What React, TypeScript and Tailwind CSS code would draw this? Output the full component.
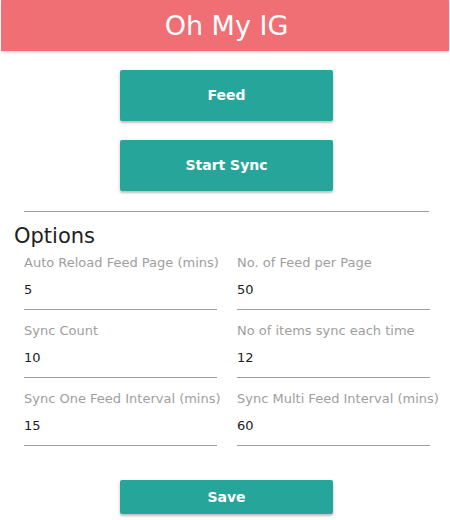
const options = [
  { label: 'Auto Reload Feed Page (mins)', value: '5' },
  { label: 'No. of Feed per Page', value: '50' },
  { label: 'Sync Count', value: '10' },
  { label: 'No of items sync each time', value: '12' },
  { label: 'Sync One Feed Interval (mins)', value: '15' },
  { label: 'Sync Multi Feed Interval (mins)', value: '60' },
];

function Btn({ children, h = 'h-[51px]' }: { children: React.ReactNode; h?: string }) {
  return (
    <button className={`w-[213px] ${h} rounded-[2px] bg-[#26a69a] text-white text-[14px] font-semibold shadow-[0_2px_2px_rgba(0,0,0,0.18),0_1px_4px_rgba(0,0,0,0.12)]`}>
      {children}
    </button>
  );
}

function Field({ label, value }: { label: string; value: string }) {
  return (
    <div className="px-[10px] h-[68px]">
      <div className="text-[13px] leading-[18px] text-[#9e9e9e] whitespace-nowrap pt-[1px]">{label}</div>
      <div className="mt-[9px] text-[13px] leading-[18px] text-[#212121] border-b border-[#9e9e9e] pb-[10px]">{value}</div>
    </div>
  );
}

export default function App() {
  return (
    <div className="w-[450px] h-[520px] bg-white font-['DejaVu_Sans',sans-serif] overflow-hidden">
      <header className="mx-px h-[51px] bg-[#ef6f74] flex items-center justify-center pl-[3px] shadow-[0_2px_2px_rgba(0,0,0,0.12)]">
        <h1 className="text-[27px] text-white leading-none">Oh My IG</h1>
      </header>

      <div className="flex flex-col items-center gap-[19px] pt-[19px] pl-[3px]">
        <Btn>Feed</Btn>
        <Btn>Start Sync</Btn>
      </div>

      <div className="pl-[24px] pr-[21px] pt-[20px]">
        <hr className="border-t border-[#9e9e9e]" />
      </div>

      <div className="ml-[14px] w-[426px]">
        <h2 className="text-[21px] leading-none text-[#212121] pt-[14px] pb-[6px]">Options</h2>
        <div className="grid grid-cols-2">
          {options.map((o) => (
            <Field key={o.label} label={o.label} value={o.value} />
          ))}
        </div>
      </div>

      <div className="flex justify-center pt-[23px] pl-[3px]">
        <Btn h="h-[34px]">Save</Btn>
      </div>
    </div>
  );
}
